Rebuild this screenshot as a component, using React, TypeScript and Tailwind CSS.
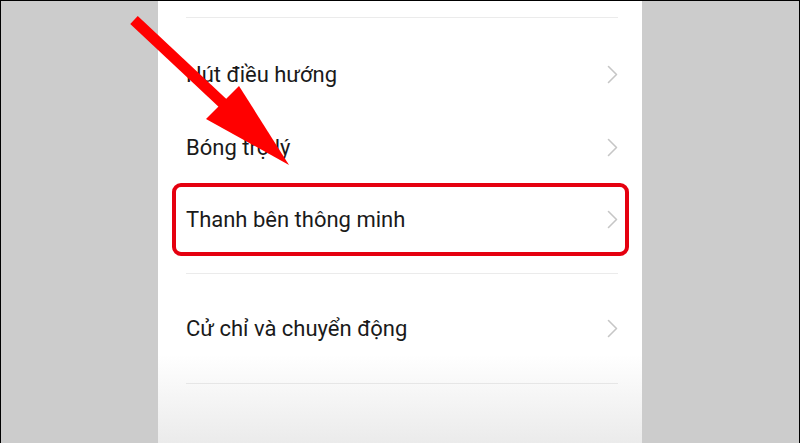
import React from "react";

const Chevron = () => (
  <svg width="11" height="19" viewBox="0 0 11 19" fill="none">
    <polyline
      points="1.5,1.5 9.5,9.5 1.5,17.5"
      stroke="#c6c6c6"
      strokeWidth="1.6"
      strokeLinecap="round"
      strokeLinejoin="round"
    />
  </svg>
);

const Row = ({ label, className }: { label: string; className: string }) => (
  <div className={`flex items-center justify-between ${className}`}>
    <span className="text-[22px] text-[#1a1a1a]">{label}</span>
    <Chevron />
  </div>
);

const App = () => {
  return (
    <div
      className="relative flex w-[800px] h-[443px] overflow-hidden border-t border-l border-r border-black bg-[#cccccc]"
      style={{ fontFamily: "Roboto, 'Noto Sans', sans-serif" }}
    >
      {/* left gray margin */}
      <div className="w-[157px] shrink-0 bg-[#cccccc]" />

      {/* phone screen */}
      <div className="w-[484px] shrink-0 flex flex-col pl-[28px] pr-[24px] bg-linear-to-b from-white from-80% to-[#ebebeb]">
        <div className="h-[16px]" />
        <div className="h-px bg-[#ebebeb]" />
        <div className="h-[20px]" />
        <Row label="Nút điều hướng" className="h-[73px]" />
        <Row label="Bóng trợ lý" className="h-[72px]" />

        {/* highlighted row */}
        <div className="-ml-[14px] -mr-[11px] h-[73px] border-[4px] border-[#e5000f] rounded-[9px] pl-[10px] pr-[7px] flex items-center justify-between">
          <span className="text-[22px] text-[#1a1a1a]">Thanh bên thông minh</span>
          <Chevron />
        </div>

        <div className="h-[17px]" />
        <div className="h-px bg-[#ebebeb]" />
        <Row label="Cử chỉ và chuyển động" className="h-[109px]" />
        <div className="h-px bg-[#e6e6e6]" />
      </div>

      {/* right gray margin */}
      <div className="flex-1 bg-[#cccccc]" />

      {/* red annotation arrow */}
      <svg
        className="absolute left-0 top-0 pointer-events-none"
        width="800"
        height="443"
        viewBox="0 0 800 443"
      >
        <line x1="133" y1="19" x2="228" y2="108" stroke="#ff0000" strokeWidth="11" strokeLinecap="butt" />
        <polygon points="205,118 238,85 288,164" fill="#ff0000" />
      </svg>
    </div>
  );
};

export default App;
